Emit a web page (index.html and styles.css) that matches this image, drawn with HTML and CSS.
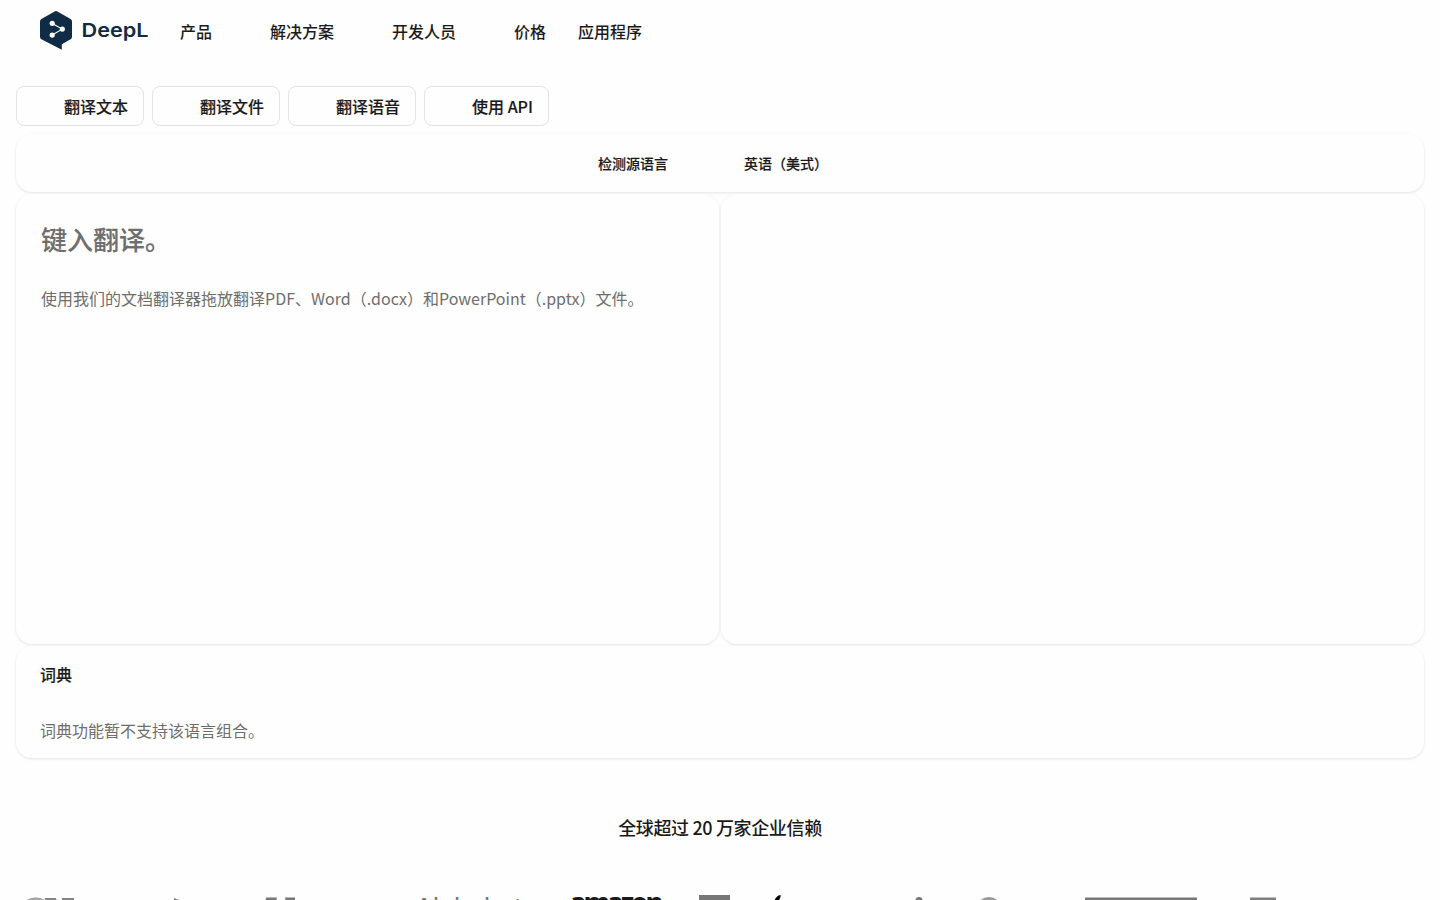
FILE: index.html
```html
<!DOCTYPE html>
<html lang="zh-CN">
<head>
  <meta charset="UTF-8" />
  <meta name="viewport" content="width=device-width, initial-scale=1" />
  <title>DeepL翻译</title>
  <link rel="stylesheet" href="styles.css">
</head>
<body>
  <header class="header">
    <a class="logo" href="#" aria-label="DeepL">
      <svg class="logo-mark" viewBox="0 0 32 39" width="32" height="39">
        <path fill="#0f2b46" d="M1.4 8.1 14.6.4a2.9 2.9 0 0 1 2.8 0l13.2 7.7A2.8 2.8 0 0 1 32 10.500v15.300a2.800 2.800 0 0 1-1.400 2.400L21.800 33.300V38.700L1.400 28.200A2.800 2.800 0 0 1 0 25.800V10.500a2.800 2.800 0 0 1 1.400-2.400z" />
        <path fill="none" stroke="#fff" stroke-width="1.100" d="M12.200 12.400 22.300 18.100 12.200 24" />
        <circle cx="12.200" cy="12.300" r="2.600" fill="#fff" />
        <circle cx="22.300" cy="18.100" r="2.600" fill="#fff" />
        <circle cx="12.200" cy="24.100" r="2.600" fill="#fff" />
      </svg>
      <svg class="logo-text" viewBox="0 0 68 39" width="68" height="39">
        <text x="0.500" y="25.500" textLength="67" lengthAdjust="spacingAndGlyphs">DeepL</text>
      </svg>
    </a>
    <nav class="nav">
      <a class="has-menu" href="#">产品</a>
      <a class="has-menu" href="#">解决方案</a>
      <a class="has-menu" href="#">开发人员</a>
      <a href="#">价格</a>
      <a href="#">应用程序</a>
    </nav>
  </header>

  <main>
    <div class="tabs">
      <button class="tab" type="button">翻译文本</button>
      <button class="tab" type="button">翻译文件</button>
      <button class="tab" type="button">翻译语音</button>
      <button class="tab" type="button">使用 API</button>
    </div>

    <section class="translator">
      <div class="card languages">
        <div class="source-lang">检测源语言</div>
        <div class="target-lang">英语（美式）</div>
      </div>
      <div class="card pane">
        <p class="placeholder">键入翻译。</p>
        <p class="hint">使用我们的文档翻译器拖放翻译PDF、Word（.docx）和PowerPoint（.pptx）文件。</p>
      </div>
      <div class="card pane"></div>
      <div class="card dictionary">
        <h2>词典</h2>
        <p>词典功能暂不支持该语言组合。</p>
      </div>
    </section>

    <section class="customers">
      <h2>全球超过 20 万家企业信赖</h2>
      <div class="brands">
        <svg class="brand-one" viewBox="0 0 52 30" width="52" height="30">
          <path fill="none" stroke="#a5a5a5" stroke-width="3" d="M2 8C6 3 15 3 19 6" />
          <path fill="#858585" d="M21 3h11l5 20 1-20h12v25H16z" />
        </svg>
        <svg class="brand-two" viewBox="0 0 16 30" width="16" height="30">
          <path fill="#777" d="M0 3 14 9 0 15z" />
        </svg>
        <svg class="brand-three" viewBox="0 0 36 30" width="36" height="30">
          <path fill="#777" d="M3 2.500h11L8 28h-8zM22 2.500h10v25h-6z" />
        </svg>
        <span class="brand-alphabet">Alphabet</span>
        <span class="brand-amazon">amazon</span>
        <svg class="brand-square" viewBox="0 0 31 31" width="31" height="31">
          <path fill="#777" d="M0 0h31v31H0z" />
        </svg>
        <svg class="brand-apple" viewBox="0 0 26 32" width="26" height="32">
          <path d="M18.600 0c.2 4-2.500 7-6 7.200C12.300 3.600 15 .5 18.600 0zM13 9c2-1 7-3 11 2-5 3-4 10 1 12-4 9-7 9-12 7-5 2-8 0-11-7C-1 14 5 6 13 9z" />
        </svg>
        <svg class="brand-dot" viewBox="0 0 8 30" width="8" height="30">
          <circle cx="4" cy="5.500" r="3.500" fill="#777" />
          <path fill="#777" d="M1 11h6v18H1z" />
        </svg>
        <svg class="brand-ring" viewBox="0 0 24 30" width="24" height="30">
          <circle cx="12" cy="15" r="11" fill="none" stroke="#999" stroke-width="4" />
        </svg>
        <svg class="brand-bar" viewBox="0 0 112 28" width="112" height="28">
          <path fill="#777" d="M0 .5h112V28H0z" />
        </svg>
        <svg class="brand-block" viewBox="0 0 26 28" width="26" height="28">
          <path fill="#808080" d="M0 .5h26V28H0z" />
        </svg>
      </div>
    </section>
  </main>
</body>
</html>
```
FILE: styles.css
```css
:root {
  --text-color: #1a1a1a;
  --muted-color: #6e6e6e;
  --brand-color: #0f2b46;
  --border-color: #e3e3e3;
}

* {
  box-sizing: border-box;
}

html {
  overflow: hidden;
}

body {
  margin: 0;
  height: 900px;
  overflow: hidden;
  font-family: "Noto Sans CJK SC", sans-serif;
  font-size: 16px;
  line-height: 24px;
  color: var(--text-color);
  background-color: #fefefe;
}

h2,
p {
  margin: 0;
}

a {
  color: inherit;
  text-decoration: none;
}

.header {
  display: flex;
  height: 64px;
  padding-left: 40px;
  align-items: center;
}

.logo {
  display: flex;
  width: 140px;
  height: 64px;
  padding-top: 11px;
  gap: 9px;
}

.logo-text {
  font-family: Inter, sans-serif;
  font-size: 19px;
  font-weight: 600;
  fill: var(--brand-color);
}

.nav {
  display: flex;
  padding-bottom: 2px;
  gap: 32px;
  font-weight: 500;
}

.has-menu {
  padding-right: 26px;
}

main {
  padding: 22px 16px 0;
}

.tabs {
  display: flex;
  gap: 8px;
}

.tab {
  height: 40px;
  padding: 0 15px 0 47px;
  border: 1px solid var(--border-color);
  border-radius: 8px;
  background: none;
  color: var(--text-color);
  font: inherit;
  font-weight: 500;
}

.tab,
.languages,
.placeholder,
.dictionary h2 {
  -webkit-text-stroke: 0.15px currentColor;
}

.translator {
  display: grid;
  grid-template-columns: 1fr 1fr;
  grid-template-rows: 58px 450px 112px;
  gap: 2px;
  margin-top: 8px;
}

.card {
  border-radius: 16px;
  background-color: #fefefe;
  box-shadow: 0 1px 3px rgba(0, 0, 0, 0.1);
}

.languages {
  display: grid;
  grid-column: 1 / 3;
  grid-template-columns: 1fr 1fr;
  align-items: center;
  font-size: 14px;
  font-weight: 500;
}

.source-lang {
  padding-right: 52px;
  text-align: right;
}

.target-lang {
  padding-left: 24px;
}

.pane {
  padding: 27px 25px;
  color: var(--muted-color);
}

.placeholder {
  font-size: 26px;
  font-weight: 500;
  line-height: 36px;
}

.hint {
  margin-top: 29px;
}

.dictionary {
  grid-column: 1 / 3;
  padding: 16px 24px;
}

.dictionary h2 {
  font-size: 16px;
  font-weight: 500;
}

.dictionary p {
  margin-top: 32px;
  color: var(--muted-color);
}

.customers h2 {
  margin-top: 55px;
  font-size: 18px;
  font-weight: 500;
  line-height: 28px;
  letter-spacing: -0.36px;
  text-align: center;
}

.brands {
  display: flex;
  height: 60px;
  margin-top: 54px;
  padding-left: 8px;
  align-items: flex-start;
}

.brands > * {
  flex: none;
}

.brand-two {
  margin-left: 98px;
}

.brand-three {
  margin-left: 73px;
}

.brand-alphabet {
  width: 110px;
  margin: -1px 2px 0 116px;
  font-family: "Liberation Sans", sans-serif;
  font-size: 27px;
  line-height: 28px;
  color: #777;
}

.brand-amazon {
  width: 92px;
  margin: -8px 0 0 43px;
  font-family: "Open Sans", sans-serif;
  font-size: 26px;
  font-weight: 800;
  line-height: 30px;
  letter-spacing: -2.5px;
}

.brand-square {
  margin-left: 37px;
}

.brand-apple {
  margin-left: 32px;
}

.brand-dot {
  margin-left: 127px;
}

.brand-ring {
  margin-left: 54px;
}

.brand-bar {
  margin: 2px 0 0 84px;
}

.brand-block {
  margin: 2px 0 0 53px;
}
```
